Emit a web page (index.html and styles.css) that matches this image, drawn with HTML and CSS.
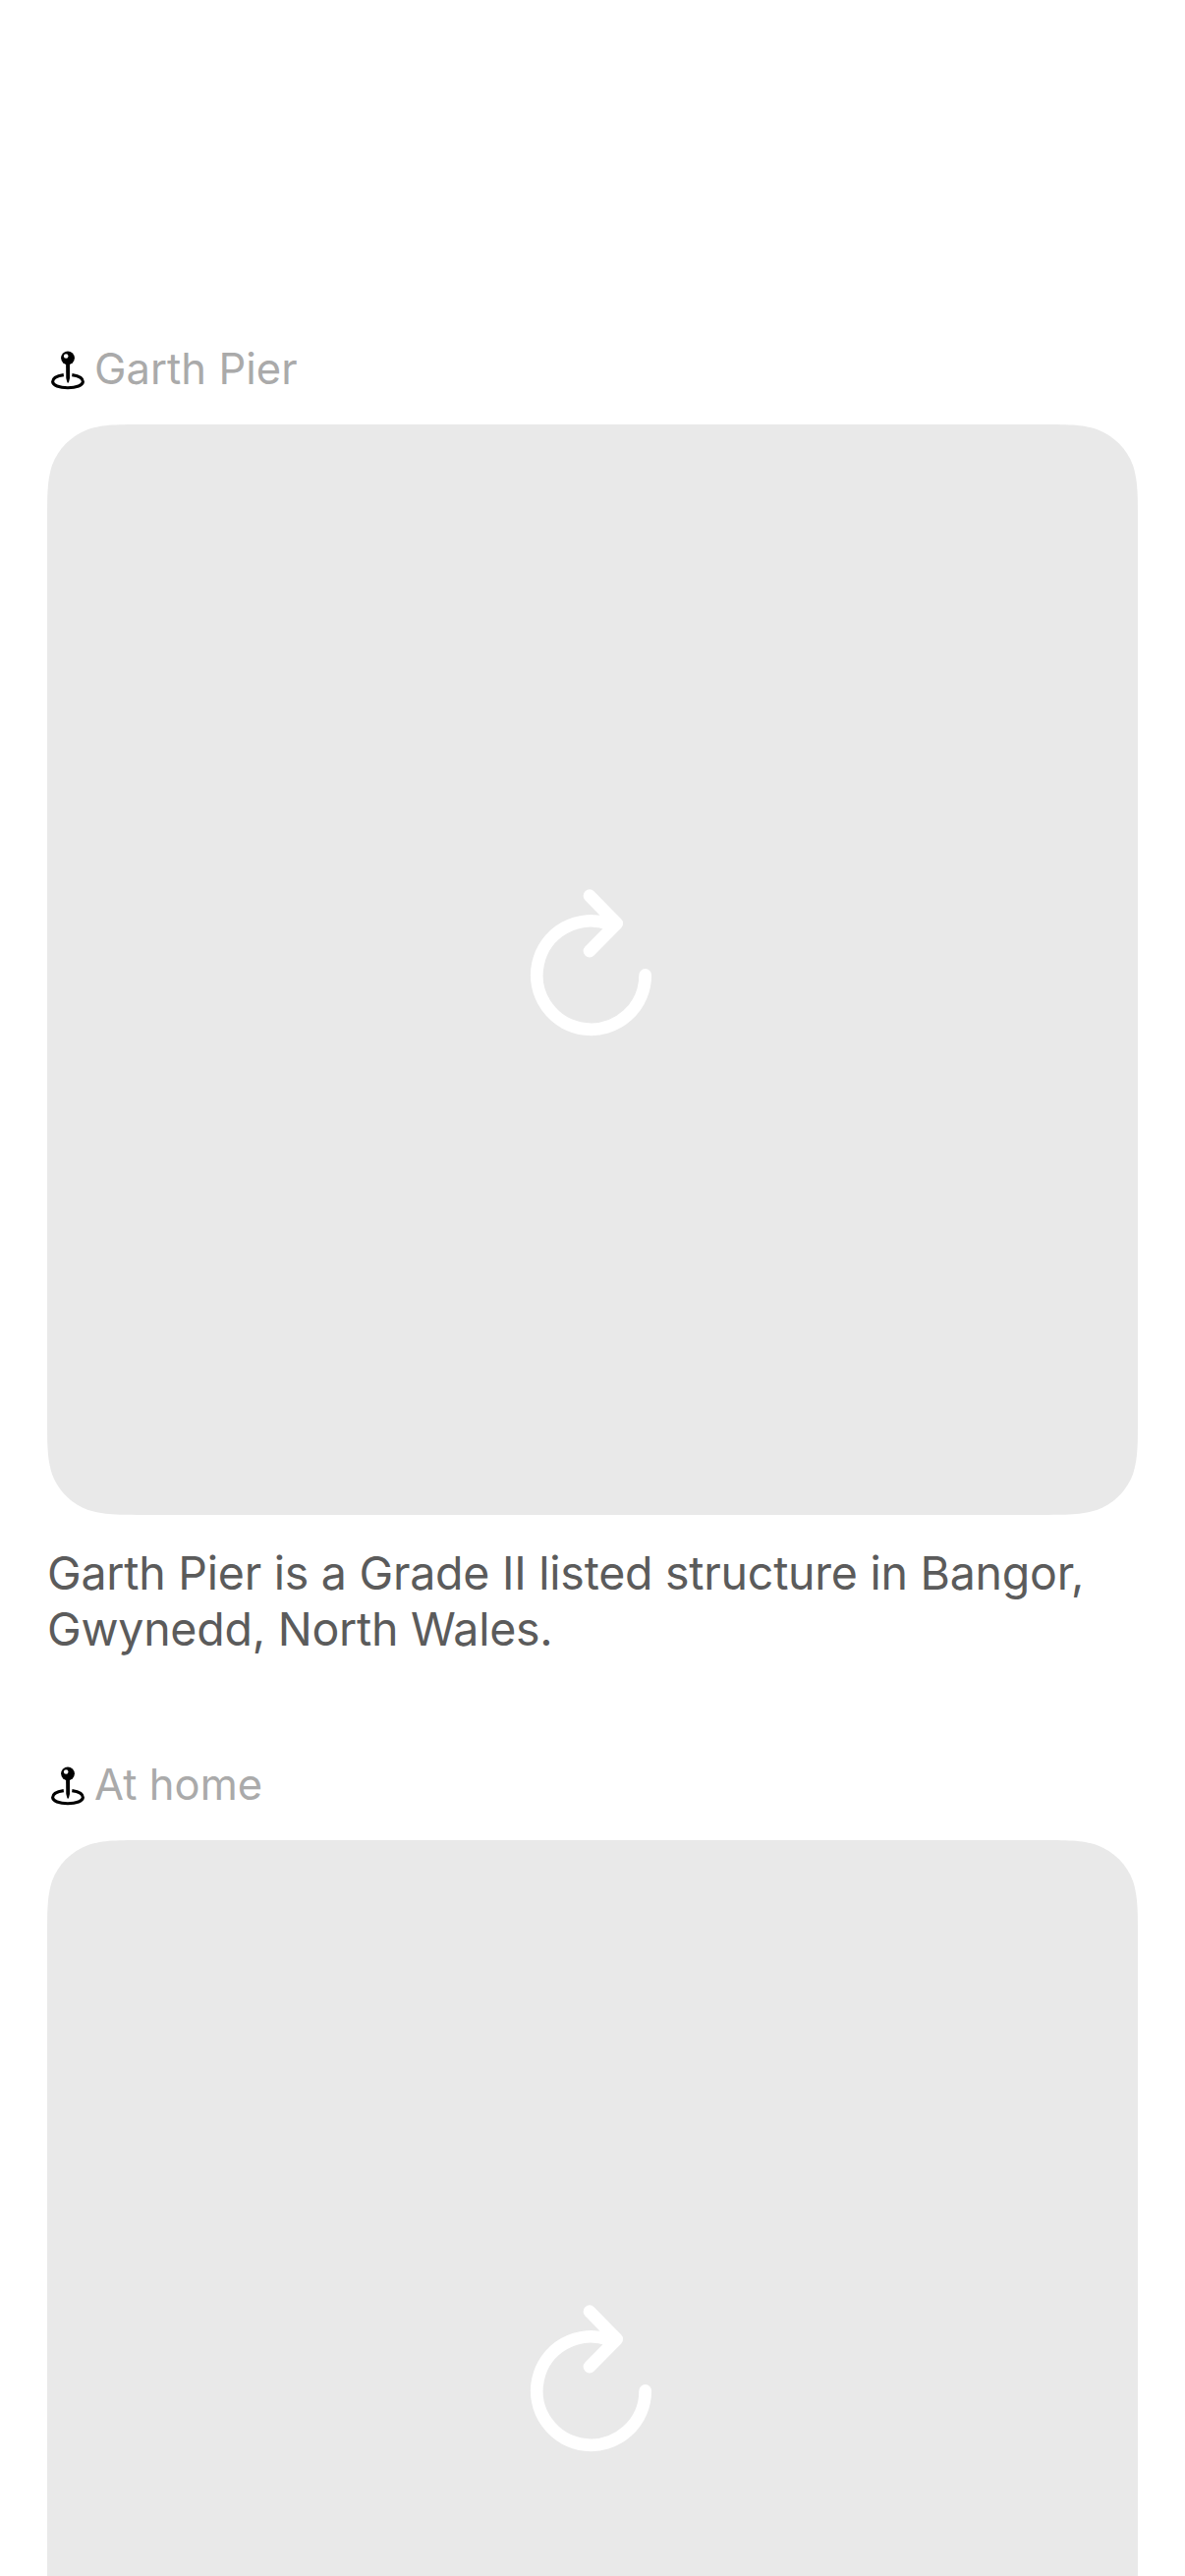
FILE: index.html
```html
<!DOCTYPE html>
<html lang="en">
<head>
<meta charset="utf-8">
<title>Places</title>
<link rel="stylesheet" href="styles.css">
</head>
<body>
<svg class="symbols" width="0" height="0" aria-hidden="true">
  <symbol id="pin" viewBox="0 0 36 42">
    <path d="M13.800 25.600C6.800 26.600 2.600 29.300 2.600 32.600C2.600 36.200 9.300 38.700 18 38.700S33.400 36.200 33.400 32.600C33.400 29.300 29.200 26.600 22.300 25.600" fill="none" stroke="#000" stroke-width="3.100"/>
    <path d="M16.100 14H20V29L18.900 33.400H17.500L16.300 29Z"/>
    <circle cx="18" cy="8.300" r="6.900"/>
    <circle cx="16.200" cy="6.500" r="2.300" fill="#fff"/>
  </symbol>
  <symbol id="reload" viewBox="0 0 160 180">
    <path d="M133.700 95.500A55.200 55.200 0 1 1 96 43.200M77 14.700L104.700 43L77 71" fill="none" stroke="#fff" stroke-width="12.800" stroke-linecap="round" stroke-linejoin="round"/>
  </symbol>
</svg>
<main class="feed">
  <article class="post">
    <header class="place"><svg class="pin"><use href="#pin"/></svg><span class="place-name">Garth Pier</span></header>
    <div class="photo"><svg class="reload"><use href="#reload"/></svg></div>
    <p class="caption">Garth Pier is a Grade II listed structure in Bangor, Gwynedd, North Wales.</p>
  </article>
  <article class="post">
    <header class="place"><svg class="pin"><use href="#pin"/></svg><span class="place-name">At home</span></header>
    <div class="photo"><svg class="reload"><use href="#reload"/></svg></div>
  </article>
</main>
</body>
</html>
```
FILE: styles.css
```css
html, body {
  margin: 0;
  height: 2622px;
  overflow: hidden;
  background: #fff;
}

body {
  font-family: Inter, "Liberation Sans", sans-serif;
}

.symbols {
  display: block;
}

.feed {
  display: flex;
  flex-direction: column;
  gap: 103px;
  box-sizing: border-box;
  height: 2622px;
  overflow: hidden;
  padding: 349px 48px 0;
}

.post {
  display: flex;
  flex-direction: column;
  flex-shrink: 0;
}

.post:last-child {
  flex: 1 1 0;
  min-height: 0;
  overflow: hidden;
}

.place {
  display: flex;
  flex-shrink: 0;
  align-items: center;
  height: 54px;
  margin-bottom: 29px;
  padding-left: 3px;
}

.pin {
  width: 36px;
  height: 42px;
  margin-top: 2px;
  margin-right: 9px;
}

.place-name {
  margin-bottom: 2px;
  font-size: 43.5px;
  line-height: 54px;
  letter-spacing: 0.05px;
  color: #aaa;
}

.photo {
  display: flex;
  flex-shrink: 0;
  align-items: center;
  justify-content: center;
  width: 1110px;
  height: 1110px;
  background: #e9e9e9;
  clip-path: path("M100.900 0H1009.100C1038.200 0 1052.700 0 1068.300 4.900C1085.400 11.200 1098.800 24.600 1105.100 41.700C1110 57.300 1110 71.800 1110 100.900V1009.100C1110 1038.200 1110 1052.700 1105.100 1068.300C1098.800 1085.400 1085.400 1098.800 1068.300 1105.100C1052.700 1110 1038.200 1110 1009.100 1110H100.900C71.800 1110 57.300 1110 41.700 1105.100C24.600 1098.800 11.200 1085.400 4.900 1068.300C0 1052.700 0 1038.200 0 1009.100V100.900C0 71.800 0 57.300 4.900 41.700C11.200 24.600 24.600 11.200 41.700 4.900C57.300 0 71.800 0 100.900 0Z");
}

.reload {
  width: 160px;
  height: 180px;
}

.caption {
  margin: 31px 0 0;
  font-size: 46.5px;
  line-height: 57px;
  letter-spacing: -0.25px;
  color: #5b5b5b;
}
```
